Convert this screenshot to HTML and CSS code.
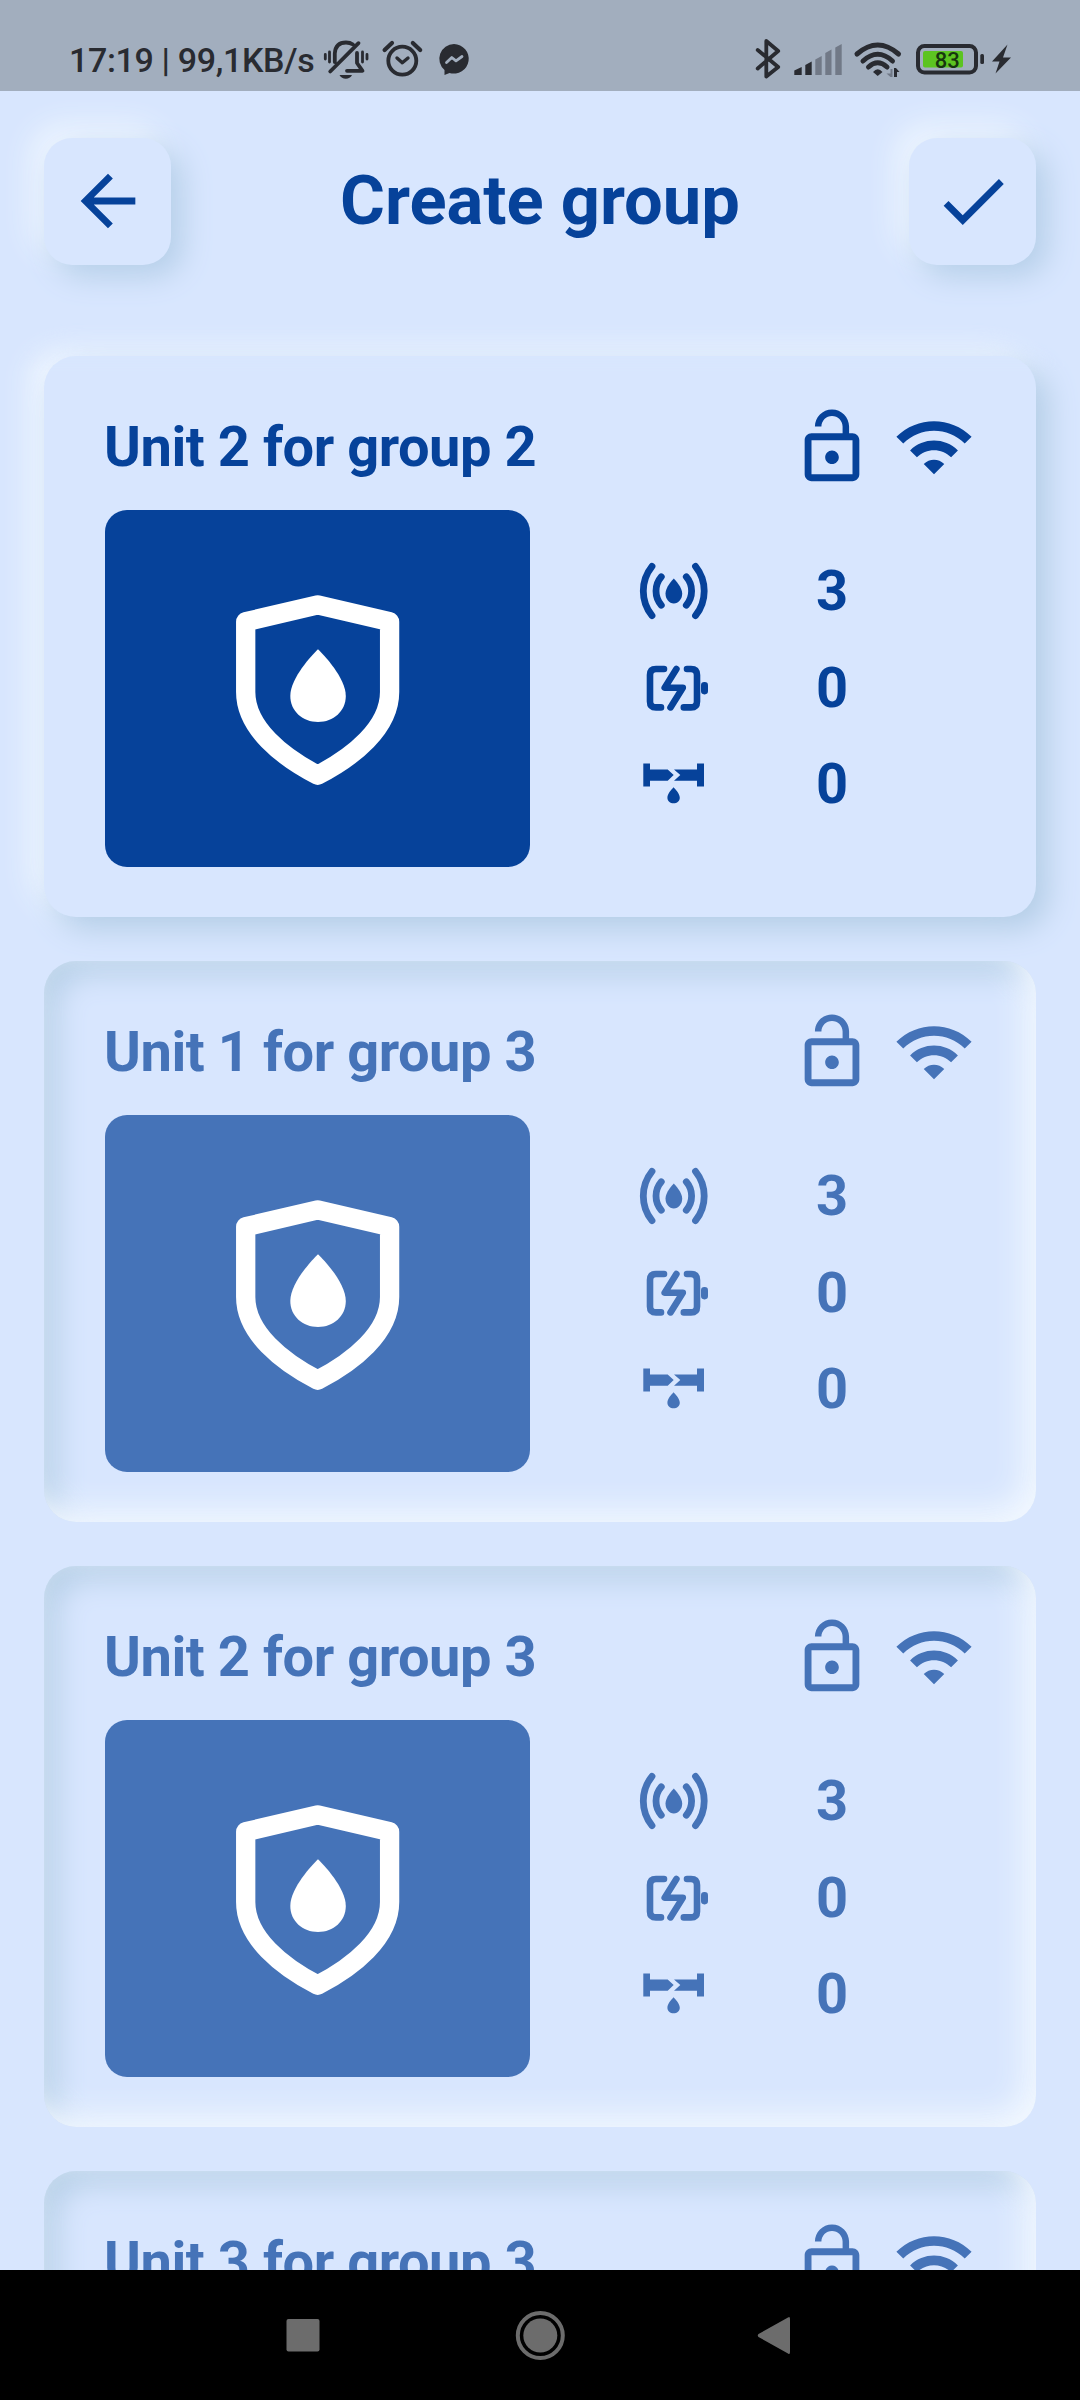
FILE: index.html
```html
<!DOCTYPE html>
<html lang="en">
<head>
<meta charset="utf-8">
<title>Create group</title>
<link rel="stylesheet" href="styles.css">
</head>
<body>
<svg class="sprite" aria-hidden="true">
  <symbol id="lock" viewBox="0 0 24 24"><path d="M12 17c1.1 0 2-.9 2-2s-.9-2-2-2-2 .9-2 2 .9 2 2 2zm6-9h-1V6c0-2.76-2.24-5-5-5S7 3.24 7 6h1.9c0-1.71 1.39-3.1 3.1-3.1 1.71 0 3.1 1.39 3.1 3.1v2H6c-1.1 0-2 .9-2 2v10c0 1.1.9 2 2 2h12c1.1 0 2-.9 2-2V10c0-1.1-.9-2-2-2zm0 12H6V10h12v10z"/></symbol>
  <symbol id="wifi" viewBox="0 0 24 24"><path d="M1 9l2 2c4.97-4.97 13.03-4.97 18 0l2-2C16.93 2.93 7.08 2.93 1 9zm8 8l3 3 3-3c-1.65-1.66-4.34-1.66-6 0zm-4-4l2 2c2.76-2.76 7.24-2.76 10 0l2-2C15.14 9.14 8.87 9.14 5 13z"/></symbol>
  <symbol id="shield" viewBox="0 0 164 190">
    <path d="M81.7 9.9L153.6 26.7V97C153.6 133 117 162 81.7 180.2C46.4 162 9.7 133 9.7 97V26.7Z" fill="none" stroke="#fff" stroke-width="19.3" stroke-linejoin="round"/>
    <path d="M82 54.2C88 60 109.8 83 109.8 101C109.8 116 97.4 127 82 127S54.3 116 54.3 101C54.3 83 76 60 82 54.2Z" fill="#fff"/>
  </symbol>
  <symbol id="sensor" viewBox="0 0 82 82">
    <g fill="none" stroke="currentColor" stroke-width="6.8" stroke-linecap="round"><path d="M19 17.3A39.4 39.4 0 0 0 19 66.7M28.3 27.800A21.7 21.7 0 0 0 28.3 56.200M62.5 17.3A39.4 39.4 0 0 1 62.5 66.7M53.3 27.800A21.7 21.7 0 0 1 53.3 56.200"/></g>
    <path d="M40.8 29.500C42.5 31.3 49.2 38.500 49.2 44.500C49.2 50 45.5 54.500 40.8 54.500S32.5 50 32.5 44.500C32.5 38.500 39 31.3 40.8 29.500Z"/>
  </symbol>
  <symbol id="battery" viewBox="0 0 82 82">
    <path d="M31 23H23Q17 23 17 29V55.400Q17 61.400 23 61.400H28M54 23H58Q64 23 64 29V55.400Q64 61.400 58 61.400H50.8M43.4 23L31.7 41.8H49.8L37.5 61.400" fill="none" stroke="currentColor" stroke-width="6.6" stroke-linecap="round" stroke-linejoin="round"/>
    <rect x="68" y="36" width="7" height="12.4" rx="3.3"/>
  </symbol>
  <symbol id="pipe" viewBox="0 0 82 82">
    <path d="M10.3 21.4H17V27.5H34.7L40.7 33L34.7 38.8H17V44.4H10.3ZM41 27.5H64V21.4H71V44.4H64V38.8H41L47.3 33ZM40.6 45.2C42.5 47.5 46.8 51.5 46.8 55.7C46.8 59 44 61.3 40.6 61.3S34.4 59 34.4 55.7C34.4 51.5 38.5 47.5 40.6 45.2Z"/>
  </symbol>
</svg>

<div class="screen">
  <div class="status">
    <span class="clock">17:19 | 99,1KB/s</span>
    <svg class="status-left" viewBox="320 0 160 91" width="160" height="91" stroke="currentColor" stroke-linecap="round" stroke-linejoin="round">
      <path d="M325.3 54.5V59M329.5 52V62M362.5 52V62M367 54.5V59" stroke-width="2.8"/>
      <path d="M334.8 62V53.5Q335.5 42.5 346 42.5Q350 42.5 353 44.5M358.5 43.2L330.2 71.5M357 53V63L362.5 70.8H347" stroke-width="3.8"/>
      <path d="M339.5 75H352Q350 78.8 345.8 78.8T339.5 75Z" fill="currentColor" stroke="none"/>
      <circle cx="402.3" cy="60.7" r="14" stroke-width="3.8"/>
      <path d="M384.6 50L392 43M420.2 50L412.8 43" stroke-width="4.2"/>
      <path d="M397 58L402.3 62.8L408 58" stroke-width="3.4"/>
      <path d="M454 44A15 14.8 0 1 1 449.5 73L444.500 75V70A15 14.8 0 0 1 454 44Z" fill="currentColor" stroke="none"/>
      <path d="M446.5 62.5L451.8 57.5L456 60.8L462 56.5" stroke="#a2aebe" stroke-width="2.8"/>
    </svg>
    <svg class="status-right" viewBox="750 0 270 91" width="270" height="91">
      <path d="M757.7 50L778.2 67L766.3 76.5V41L778.2 51L757.7 68.5" fill="none" stroke="currentColor" stroke-width="3.8" stroke-linecap="round" stroke-linejoin="round"/>
      <path d="M794.3 75V70.5L801.7 67V75ZM805.3 75V65L811.7 61.5V75Z"/>
      <path d="M815.3 75V59.5L821.7 56V75ZM825.3 75V53L831.5 49.5V75ZM835.3 75V47.5L841.7 44V75Z" fill="#717987"/>
      <path d="M857 54Q877.7 36 898.5 54M863 61Q877.7 47.500 892.5 61M868.500 67Q877.7 58.500 887 67" fill="none" stroke="currentColor" stroke-width="5" stroke-linecap="round"/>
      <path d="M873 72Q877.7 66.500 882.5 72L877.7 76Z"/>
      <path d="M890.5 69H892.500V77H890.5L886.5 73.5H890.5Z" fill="#717987"/><path d="M894 77V68H896L899.5 72H897V77Z"/>
      <rect x="918" y="46" width="58" height="26.5" rx="6.5" fill="none" stroke="currentColor" stroke-width="4"/>
      <rect x="923" y="51" width="40" height="16.5" rx="2" fill="#5cc421"/>
      <text class="charge" x="947.2" y="67.5" text-anchor="middle">83</text>
      <rect x="980.3" y="54" width="3.7" height="10" rx="1.5"/>
      <path d="M1007.500 44.5L992 61.5H999.5L995.5 73.5L1011 57.500H1003Z"/>
    </svg>
  </div>

  <header class="header">
    <button class="icon-button" aria-label="Back"><svg viewBox="0 0 24 24"><path d="M20 11H7.83l5.59-5.59L12 4l-8 8 8 8 1.41-1.41L7.83 13H20v-2z"/></svg></button>
    <h1 class="title">Create group</h1>
    <button class="icon-button" aria-label="Confirm"><svg viewBox="0 0 24 24"><path d="M9 16.17L4.83 12l-1.42 1.41L9 19 21 7l-1.41-1.41z"/></svg></button>
  </header>

  <main class="list">
    <section class="card card-raised">
      <div class="card-head"><h2 class="name">Unit 2 for group 2</h2><svg class="icon"><use href="#lock"/></svg><svg class="icon"><use href="#wifi"/></svg></div>
      <div class="card-body">
        <div class="thumb"><svg class="shield"><use href="#shield"/></svg></div>
        <div class="stats">
          <svg class="icon"><use href="#sensor"/></svg><span class="count">3</span>
          <svg class="icon"><use href="#battery"/></svg><span class="count">0</span>
          <svg class="icon"><use href="#pipe"/></svg><span class="count">0</span>
        </div>
      </div>
    </section>
    <section class="card card-sunken">
      <div class="card-head"><h2 class="name">Unit 1 for group 3</h2><svg class="icon"><use href="#lock"/></svg><svg class="icon"><use href="#wifi"/></svg></div>
      <div class="card-body">
        <div class="thumb"><svg class="shield"><use href="#shield"/></svg></div>
        <div class="stats">
          <svg class="icon"><use href="#sensor"/></svg><span class="count">3</span>
          <svg class="icon"><use href="#battery"/></svg><span class="count">0</span>
          <svg class="icon"><use href="#pipe"/></svg><span class="count">0</span>
        </div>
      </div>
    </section>
    <section class="card card-sunken">
      <div class="card-head"><h2 class="name">Unit 2 for group 3</h2><svg class="icon"><use href="#lock"/></svg><svg class="icon"><use href="#wifi"/></svg></div>
      <div class="card-body">
        <div class="thumb"><svg class="shield"><use href="#shield"/></svg></div>
        <div class="stats">
          <svg class="icon"><use href="#sensor"/></svg><span class="count">3</span>
          <svg class="icon"><use href="#battery"/></svg><span class="count">0</span>
          <svg class="icon"><use href="#pipe"/></svg><span class="count">0</span>
        </div>
      </div>
    </section>
    <section class="card card-sunken">
      <div class="card-head"><h2 class="name">Unit 3 for group 3</h2><svg class="icon"><use href="#lock"/></svg><svg class="icon"><use href="#wifi"/></svg></div>
    </section>
  </main>

  <nav class="navbar">
    <svg viewBox="0 0 1080 130" width="1080" height="130">
      <rect x="286.5" y="49" width="33" height="32.5" rx="2"/>
      <circle cx="540.3" cy="65.5" r="22.5" fill="none" stroke="currentColor" stroke-width="4"/>
      <circle cx="540.3" cy="65.5" r="17"/>
      <path d="M788 47.5Q790 46 790 49V82Q790 85 788 83.5L758.5 67Q757 65.5 758.5 64Z"/>
    </svg>
  </nav>
</div>
</body>
</html>
```
FILE: styles.css
```css
* { box-sizing: border-box; margin: 0; }
body { background: #d8e6fe; font-family: Roboto, sans-serif; color: #06429a; }
svg { display: block; flex: none; fill: currentColor; }
.sprite { display: none; }
.screen { width: 1080px; height: 2400px; display: flex; flex-direction: column; overflow: hidden; }

.status { height: 91px; flex: none; display: flex; background: #a2aebe; color: #292b31; padding-left: 69px; }
.clock { width: 251px; padding-top: 30px; font-size: 34px; line-height: 61px; font-weight: 500; letter-spacing: -0.35px; white-space: nowrap; }
.status-left { fill: none; }
.status-right { margin-left: 270px; }
.charge { font-size: 22px; font-weight: 500; fill: #17350f; }

.header { height: 217px; flex: none; padding: 46.5px 44px 0; display: flex; align-items: flex-start; justify-content: space-between; }
.icon-button { width: 127px; height: 127px; padding: 0; border: 0; border-radius: 28px; background: #d8e6fe; color: #06429a; display: grid; place-items: center; box-shadow: 11px 11px 30px #b4cee8, -11px -11px 30px #f2f8ff; }
.icon-button svg { width: 82px; height: 82px; }
.title { font-size: 68.7px; line-height: 126px; font-weight: 700; white-space: nowrap; }

.list { flex: 1; min-height: 0; overflow: hidden; padding: 48px 44px 0; display: flex; flex-direction: column; gap: 44px; -webkit-mask-image: linear-gradient(to bottom, transparent 0, #000 64px); mask-image: linear-gradient(to bottom, transparent 0, #000 64px); }
.card { height: 561px; flex: none; border-radius: 32px; padding: 50px 60px; }
.card-raised { background: #d8e6fe; box-shadow: 12px 12px 30px #b3cde6, -12px -12px 30px #f2f8ff; }
.card-sunken { color: #4573b8; box-shadow: inset -12px -12px 30px #f2f8ff, inset 12px 12px 30px #b3cde6; }
.card-head { height: 82px; display: flex; align-items: center; gap: 20px; padding-right: 1.5px; }
.name { flex: 1; font-size: 56px; line-height: 80px; font-weight: 700; letter-spacing: -0.45px; white-space: nowrap; padding-bottom: 1px; }
.icon { width: 82px; height: 82px; }
.card-body { margin-top: 22px; display: flex; }
.thumb { width: 425px; height: 357px; margin-left: 0.5px; border-radius: 22px; background: currentColor; display: grid; place-items: center; padding: 2px 0 0 1px; }
.shield { width: 164px; height: 190px; }
.stats { margin: 32px 0 0 103.5px; display: grid; grid-template-columns: 82px 100px; grid-auto-rows: 96.5px; column-gap: 67px; align-items: center; height: 290px; }
.count { font-size: 56px; line-height: 66px; font-weight: 700; text-align: center; padding-top: 2px; }

.navbar { height: 130px; flex: none; background: #000; color: #6c6c6c; }
```
